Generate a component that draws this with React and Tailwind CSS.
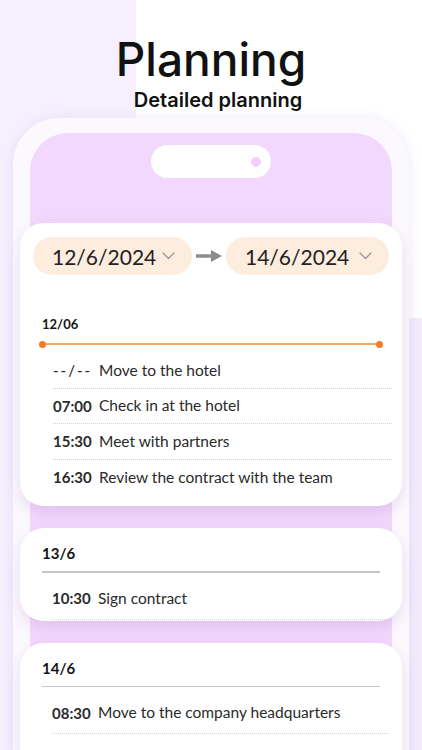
import React from 'react';

const dayOne = [
    { time: '--/--', text: 'Move to the hotel', empty: true },
    { time: '07:00', text: 'Check in at the hotel' },
    { time: '15:30', text: 'Meet with partners' },
    { time: '16:30', text: 'Review the contract with the team' },
];

function Chevron() {
    return (
        <svg width="13" height="8" viewBox="0 0 13 8" fill="none">
            <polyline points="1,1 6.5,6.5 12,1" stroke="#9b9b9b" strokeWidth="1.4" strokeLinecap="round" strokeLinejoin="round" />
        </svg>
    );
}

function DatePill({ value, className }) {
    return (
        <div className={`h-[38px] rounded-full bg-[#fdeddf] flex items-center justify-between pl-[19px] pr-[17px] ${className}`}>
            <span className="text-[21px] leading-none text-[#222]">{value}</span>
            <Chevron />
        </div>
    );
}

function Row({ time, text, empty, last, tall }) {
    return (
        <div className={`flex items-center ${tall ? 'h-[41px]' : 'h-[35.5px]'} ${last ? '' : 'border-b border-dotted border-[#d4d4d4]'}`}>
            {empty ? (
                <span className="w-[39px] whitespace-nowrap text-[15px] font-medium tracking-[2px] text-[#2a2a2a]">{time}</span>
            ) : (
                <span className="w-[39px] whitespace-nowrap text-[15px] font-bold text-[#2a2a2a]">{time}</span>
            )}
            <span className="ml-[7px] whitespace-nowrap text-[15.5px] text-[#2a2a2a]">{text}</span>
        </div>
    );
}

function DayCard({ title, rows }) {
    return (
        <div className="-mx-[10px] mt-[22px] rounded-[24px] bg-white shadow-[0_6px_16px_rgba(140,90,170,0.18)] pt-[15px] pb-[1px]">
            <div className="pl-[22px] text-[15px] leading-[20px] font-bold text-[#151515]">{title}</div>
            <div className="mx-[22px] mt-[8px] h-[1.5px] bg-[#c6c6c6]" />
            <div className="mt-[6px] pl-[32px] pr-[13px]">
                {rows.map((r, i) => (
                    <Row key={i} {...r} tall last={false} />
                ))}
            </div>
        </div>
    );
}

export default function App() {
    return (
        <div className="relative w-full h-[750px] overflow-hidden bg-white font-['Lato',sans-serif]">
            {/* fondo */}
            <div className="absolute left-0 top-0 h-full w-[136px] bg-[#f6f0fe]" />
            <div className="absolute right-0 top-[318px] bottom-0 w-[19px] bg-[#f4ecfd]" />

            <div className="relative">
                <h1 className="pt-[36px] text-center text-[46px] leading-[46px] font-medium text-[#111] font-['Inter',sans-serif]">
                    Planning
                </h1>
                <p className="mt-[6px] pl-[14px] text-center text-[20px] leading-[24px] font-semibold text-[#111] font-['Inter',sans-serif]">
                    Detailed planning
                </p>

                {/* telefono */}
                <div className="mt-[6px] ml-[13px] w-[396px] rounded-t-[46px] bg-[#fcf9fe] px-[17px] pt-[15px] shadow-[0_0_12px_rgba(200,170,230,0.25)]">
                    <div className="rounded-t-[38px] bg-[#f3d8fd] pt-[12px] pb-[200px]">
                        <div className="mx-auto w-[120px] h-[33px] rounded-full bg-white flex items-center justify-end pr-[10px]">
                            <div className="w-[10px] h-[10px] rounded-full bg-[#f0d0fb]" />
                        </div>

                        {/* tarjeta principal */}
                        <div className="-mx-[10px] mt-[45px] rounded-[24px] bg-white shadow-[0_6px_16px_rgba(140,90,170,0.18)] px-[13px] pt-[14px] pb-[11px]">
                            <div className="flex items-center">
                                <DatePill value="12/6/2024" className="w-[159px]" />
                                <div className="w-[34px] flex justify-center">
                                    <svg width="26" height="14" viewBox="0 0 26 14">
                                        <line x1="0" y1="7" x2="17" y2="7" stroke="#8d8d8d" strokeWidth="3.5" />
                                        <polygon points="15,1 26,7 15,13" fill="#8d8d8d" />
                                    </svg>
                                </div>
                                <DatePill value="14/6/2024" className="flex-1" />
                            </div>

                            <div className="mt-[39px] ml-[9px] text-[13px] leading-[20px] font-bold text-[#151515]">12/06</div>

                            <div className="mt-[6.5px] mx-[6px] h-[7px] flex items-center">
                                <div className="w-[7px] h-[7px] rounded-full bg-[#f57b20]" />
                                <div className="flex-1 h-[1.5px] bg-[#f4a764]" />
                                <div className="w-[7px] h-[7px] rounded-full bg-[#f57b20]" />
                            </div>

                            <div className="mt-[5.5px] ml-[20px] -mr-[3px]">
                                {dayOne.map((r, i) => (
                                    <Row key={i} {...r} last={i === dayOne.length - 1} />
                                ))}
                            </div>
                        </div>

                        <DayCard title="13/6" rows={[{ time: '10:30', text: 'Sign contract' }]} />
                        <DayCard title="14/6" rows={[{ time: '08:30', text: 'Move to the company headquarters' }, { time: '', text: '' }]} />
                    </div>
                </div>
            </div>
        </div>
    );
}
